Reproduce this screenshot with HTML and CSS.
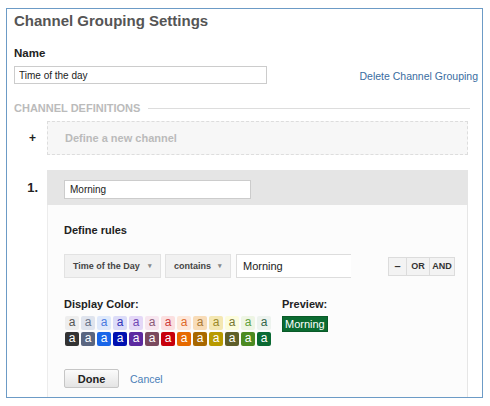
FILE: index.html
```html
<!DOCTYPE html>
<html lang="en">
  <head>
    <meta charset="UTF-8" />
    <title>Channel Grouping Settings</title>
    <link rel="stylesheet" href="styles.css">
  </head>
  <body>
    <div class="settings-frame">
      <h1 class="page-title">Channel Grouping Settings</h1>

      <!-- Name -->
      <div class="field-label">Name</div>
      <div class="name-row">
        <input class="name-input" type="text" value="Time of the day" />
        <a class="link delete-link" href="#">Delete Channel Grouping</a>
      </div>

      <!-- Channel definitions -->
      <div class="section-head">
        <span>CHANNEL DEFINITIONS</span>
        <span class="section-line"></span>
      </div>

      <div class="channel-row new-row">
        <div class="channel-num plus">+</div>
        <div class="new-channel">Define a new channel</div>
      </div>

      <div class="channel-row">
        <div class="channel-num">1.</div>
        <div class="channel-box">
          <div class="channel-header">
            <input class="channel-name" type="text" value="Morning" />
          </div>
          <div class="channel-body">
            <div class="rules-title">Define rules</div>
            <div class="rule-row">
              <div class="dropdown dim">Time of the Day <span class="caret">&#9662;</span></div>
              <div class="dropdown op">contains <span class="caret">&#9662;</span></div>
              <input class="rule-value" type="text" value="Morning" />
              <div class="btn-group">
                <button class="minus">&ndash;</button>
                <button class="or">OR</button>
                <button class="and">AND</button>
              </div>
            </div>

            <div class="color-row">
              <div class="color-col">
                <div class="small-label">Display Color:</div>
                <div class="swatches" id="swatches"></div>
              </div>
              <div class="preview-col">
                <div class="small-label">Preview:</div>
                <span class="preview-badge">Morning</span>
              </div>
            </div>

            <div class="actions">
              <button class="done-button">Done</button>
              <a class="link cancel-link" href="#">Cancel</a>
            </div>
          </div>
        </div>
      </div>
    </div>

    <script>
      // light row: [background, text], dark row: background with white text
      const lightColors = [
        ["#eeeeee", "#555555"], ["#dfe4ee", "#6a7488"], ["#dfe9fb", "#4a7be0"],
        ["#dcdcf8", "#3434b8"], ["#e4d8f7", "#7046b4"], ["#f7e6ef", "#8a5a78"],
        ["#fbdfe0", "#cc3a3a"], ["#fde8da", "#dd6a2a"], ["#f8dcb8", "#aa7a36"],
        ["#f4e7b2", "#9a8a2a"], ["#fcfcdc", "#777733"], ["#eef5e4", "#5fa040"],
        ["#edf3ee", "#33664a"]
      ];
      const darkColors = [
        "#333333", "#5a6680", "#1a66e8", "#0010b0", "#5c2aa0", "#7a4a5e",
        "#c8000c", "#e66a00", "#a86800", "#b89a00", "#5e5e2a", "#4c8a22", "#0b6a33"
      ];

      const swatches = document.getElementById("swatches");

      lightColors.forEach(([bg, fg]) => {
        const s = document.createElement("span");
        s.className = "swatch";
        s.textContent = "a";
        s.style.background = bg;
        s.style.color = fg;
        swatches.appendChild(s);
      });

      darkColors.forEach((bg) => {
        const s = document.createElement("span");
        s.className = "swatch";
        s.textContent = "a";
        s.style.background = bg;
        s.style.color = "#ffffff";
        swatches.appendChild(s);
      });
    </script>
  </body>
</html>
```

FILE: styles.css
```css
/* Global */
body {
  margin: 0;
  padding: 0;
  font-family: "Liberation Sans", Arial, sans-serif;
  background-color: #ffffff;
  color: #333333;
}

input,
button {
  font-family: inherit;
}

/* Outer frame */
.settings-frame {
  margin: 8px 0 0 6px;
  width: 477px;
  height: 390px;
  padding: 0 4px 0 7px;
  border: 1px solid #6c9bc6;
  box-sizing: border-box;
  overflow: hidden;
}

.page-title {
  margin: 2px 0 0;
  font-size: 15px;
  line-height: 20px;
  font-weight: bold;
  color: #555555;
}

/* Name */
.field-label {
  margin-top: 15px;
  font-size: 11.5px;
  line-height: 15px;
  font-weight: bold;
  color: #222222;
}

.name-row {
  display: flex;
  align-items: center;
  justify-content: space-between;
  margin-top: 5px;
}

.name-input {
  width: 253px;
  height: 18px;
  padding: 0 4px;
  border: 1px solid #cccccc;
  box-sizing: border-box;
  font-size: 10px;
  color: #222222;
}

.link {
  color: #3a6d9f;
  text-decoration: none;
  font-size: 10.5px;
}

.delete-link {
  margin-top: 2px;
}

/* Channel definitions */
.section-head {
  display: flex;
  align-items: center;
  gap: 8px;
  margin-top: 17px;
  margin-right: 8px;
  font-size: 11px;
  line-height: 14px;
  font-weight: bold;
  color: #bbbbbb;
}

.section-line {
  flex: 1;
  height: 1px;
  background-color: #dddddd;
}

.channel-row {
  display: flex;
  align-items: flex-start;
}

.new-row {
  margin-top: 6px;
  align-items: center;
}

.channel-num {
  width: 33px;
  padding-right: 9px;
  box-sizing: border-box;
  text-align: right;
  font-size: 13px;
  font-weight: bold;
  color: #222222;
}

.channel-num.plus {
  padding-right: 11px;
  font-size: 12px;
}

.new-channel {
  width: 421px;
  height: 34px;
  padding-left: 17px;
  box-sizing: border-box;
  display: flex;
  align-items: center;
  border: 1px dashed #dddddd;
  background-color: #f7f7f7;
  font-size: 11px;
  font-weight: bold;
  color: #bbbbbb;
}

/* Channel 1 */
.channel-row + .channel-row {
  margin-top: 15px;
}

.channel-row + .channel-row .channel-num {
  padding-top: 10px;
}

.channel-box {
  width: 421px;
}

.channel-header {
  height: 35px;
  padding: 9px 0 0 17px;
  box-sizing: border-box;
  background-color: #e5e5e5;
}

.channel-name {
  width: 187px;
  height: 19px;
  padding: 0 5px;
  border: 1px solid #cccccc;
  box-sizing: border-box;
  font-size: 10px;
  color: #222222;
}

.channel-body {
  height: 200px;
  padding: 18px 0 0 16px;
  border-left: 1px solid #ececec;
  border-right: 1px solid #e6e6e6;
  background-color: #fcfcfc;
}

.rules-title {
  font-size: 11px;
  line-height: 15px;
  font-weight: bold;
  color: #222222;
}

.rule-row {
  display: flex;
  align-items: center;
  margin-top: 16px;
  height: 24px;
}

.dropdown {
  height: 24px;
  padding: 0 0 0 8px;
  box-sizing: border-box;
  display: flex;
  align-items: center;
  background-color: #f1f1f1;
  border: 1px solid #e2e2e2;
  font-size: 9px;
  font-weight: bold;
  color: #444444;
}

.dropdown.dim {
  width: 97px;
}

.dropdown.op {
  width: 66px;
  margin-left: 4px;
}

.caret {
  margin-left: auto;
  margin-right: 8px;
  font-size: 7px;
  color: #888888;
}

.rule-value {
  width: 115px;
  height: 24px;
  margin-left: 5px;
  padding: 0 6px;
  border: 1px solid #dddddd;
  border-right: none;
  box-sizing: border-box;
  font-size: 11px;
  color: #222222;
}

.btn-group {
  display: flex;
  margin-left: 37px;
  height: 19px;
}

.btn-group button {
  height: 19px;
  padding: 0;
  border: 1px solid #dcdcdc;
  border-left: none;
  background-color: #f3f3f3;
  font-size: 9px;
  font-weight: bold;
  color: #333333;
}

.btn-group button.minus {
  width: 19px;
  border-left: 1px solid #dcdcdc;
  font-size: 11px;
}

.btn-group button.or {
  width: 23px;
}

.btn-group button.and {
  width: 25px;
}

/* Display color */
.color-row {
  display: flex;
  margin-top: 19px;
}

.color-col {
  width: 218px;
}

.small-label {
  font-size: 11px;
  line-height: 14px;
  font-weight: bold;
  color: #222222;
}

.swatches {
  display: grid;
  grid-template-columns: repeat(13, 14px);
  gap: 2px;
  margin-top: 5px;
  margin-left: 1px;
}

.swatch {
  width: 14px;
  height: 14px;
  border-radius: 2px;
  text-align: center;
  font-size: 12px;
  line-height: 13px;
}

.preview-badge {
  display: inline-block;
  margin-top: 5px;
  padding: 0 2px;
  height: 14px;
  line-height: 14px;
  background-color: #0b6b31;
  border: 1px solid #0a5a28;
  color: #ffffff;
  font-size: 11px;
}

/* Actions */
.actions {
  display: flex;
  align-items: center;
  gap: 11px;
  margin-top: 23px;
}

.done-button {
  width: 55px;
  height: 19px;
  border: 1px solid #c6c6c6;
  border-radius: 2px;
  background: linear-gradient(#fbfbfb, #e4e4e4);
  font-size: 11px;
  font-weight: bold;
  color: #222222;
}

.cancel-link {
  color: #4a80b8;
}
```
